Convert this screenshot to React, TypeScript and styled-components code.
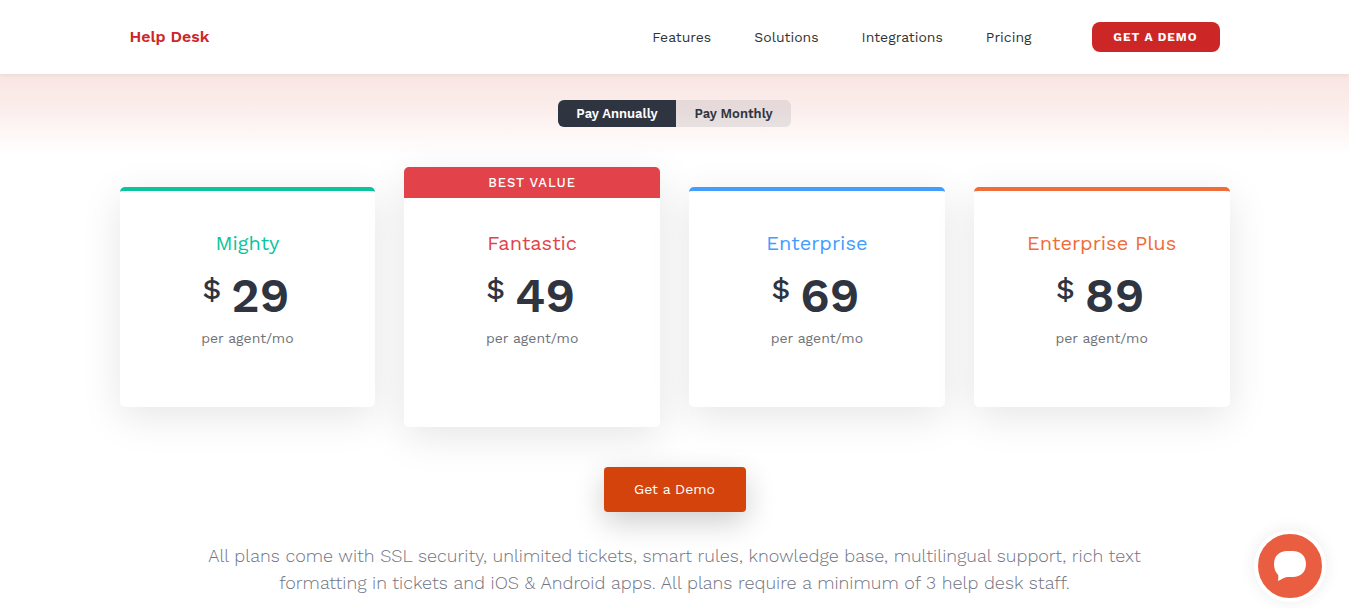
import React, { useState } from "react";
import styled, { createGlobalStyle } from "styled-components";

const GlobalStyle = createGlobalStyle`
  *, *::before, *::after { box-sizing: border-box; }
  body {
    margin: 0;
    background: #fff;
    color: #2f3441;
    font-family: "Work Sans", Inter, "Liberation Sans", sans-serif;
    font-size: 14px;
    overflow-x: hidden;
  }
  button { font-family: inherit; border: 0; cursor: pointer; }
  a { text-decoration: none; }
  h2, p { margin: 0; font-weight: 400; }
`;

const Header = styled.header`
  position: relative;
  background: #fff;
  box-shadow: 0 1px 4px rgba(90, 60, 20, 0.08);
  padding: 22px 16px;
`;

const HeaderInner = styled.div`
  max-width: 1090px;
  margin: 0 auto;
  display: flex;
  align-items: center;
  height: 30px;
`;

const Brand = styled.a`
  margin-right: auto;
  padding-bottom: 2px;
  color: #cd2626;
  font-size: 16px;
  font-weight: 600;
`;

const Nav = styled.nav`
  display: flex;
  gap: 43px;
  margin-right: 60px;
`;

const NavLink = styled.a`
  color: #333;
  font-size: 14px;
  font-weight: 400;
  line-height: 20px;
`;

const HeaderButton = styled.button`
  width: 128px;
  height: 30px;
  padding: 0;
  border-radius: 8px;
  background: #cd2626;
  color: #fff;
  font-size: 12px;
  font-weight: 700;
  letter-spacing: 1px;
`;

const Main = styled.main`
  display: flex;
  flex-direction: column;
  align-items: center;
  padding: 26px 16px 24px;
  background: linear-gradient(#f8e5e3 0, #fbeeec 36px, #fff 80px);
`;

const Toggle = styled.div`
  display: flex;
  border-radius: 6px;
  overflow: hidden;
`;

const ToggleButton = styled.button<{ $active: boolean; $width: number }>`
  width: ${(p) => p.$width}px;
  height: 27px;
  padding: 0;
  background: ${(p) => (p.$active ? "#2f3441" : "rgba(47, 52, 65, 0.1)")};
  color: ${(p) => (p.$active ? "#fff" : "#2f3441")};
  font-size: 13px;
  font-weight: 600;
`;

const Plans = styled.section`
  display: grid;
  grid-template-columns: repeat(4, 1fr);
  gap: 29px;
  align-items: center;
  width: 100%;
  max-width: 1110px;
  margin-top: 40px;
`;

const Card = styled.article<{ $color: string; $featured?: boolean }>`
  min-height: ${(p) => (p.$featured ? 260 : 220)}px;
  border-radius: 5px;
  border-top: ${(p) => (p.$featured ? "0" : `4px solid ${p.$color}`)};
  background: #fff;
  box-shadow: 0 10px 40px rgba(0, 0, 0, 0.1);
  text-align: center;
  overflow: hidden;
`;

const Ribbon = styled.div`
  background: #e2434b;
  color: #fff;
  font-size: 13px;
  font-weight: 500;
  line-height: 31px;
  letter-spacing: 1px;
`;

const CardBody = styled.div<{ $featured?: boolean }>`
  padding-top: ${(p) => (p.$featured ? 33 : 40)}px;
`;

const PlanName = styled.h2<{ $color: string }>`
  color: ${(p) => p.$color};
  font-size: 20px;
  line-height: 24px;
`;

const Price = styled.div`
  display: flex;
  justify-content: center;
  align-items: flex-start;
  gap: 10px;
  margin-top: 12px;
  padding-right: 3px;
  font-weight: 600;
`;

const Currency = styled.span`
  font-size: 30px;
  font-weight: 500;
  line-height: 44px;
`;

const Amount = styled.span`
  font-size: 48px;
  line-height: 58px;
`;

const Unit = styled.p`
  margin-top: 3px;
  color: #6f7278;
  font-size: 14px;
  line-height: 20px;
`;

const DemoButton = styled.button`
  width: 142px;
  height: 45px;
  padding: 0 0 2px;
  margin-top: 40px;
  border-radius: 4px;
  background: #d5430c;
  color: #fff;
  font-size: 14px;
  font-weight: 400;
  box-shadow: 0 10px 30px rgba(0, 0, 0, 0.2);
`;

const Note = styled.p`
  max-width: 950px;
  margin-top: 30px;
  color: #70747f;
  font-size: 18px;
  font-weight: 300;
  line-height: 27px;
  text-align: center;
`;

const ChatButton = styled.button`
  position: fixed;
  right: 23px;
  bottom: 6px;
  display: grid;
  place-items: center;
  width: 72px;
  height: 72px;
  padding: 0;
  border: 4px solid #fff;
  border-radius: 50%;
  background: #e95d41;
  box-shadow: 0 0 16px rgba(0, 0, 0, 0.08);
`;

const plans = [
  { name: "Mighty", color: "#0cc49c", annual: 29, monthly: 39 },
  { name: "Fantastic", color: "#e2434b", annual: 49, monthly: 59, featured: true },
  { name: "Enterprise", color: "#429dff", annual: 69, monthly: 79 },
  { name: "Enterprise Plus", color: "#f06c39", annual: 89, monthly: 99 },
];

export default function App() {
  const [annual, setAnnual] = useState(true);
  return (
    <>
      <GlobalStyle />
      <Header>
        <HeaderInner>
          <Brand href="#">Help Desk</Brand>
          <Nav>
            {["Features", "Solutions", "Integrations", "Pricing"].map((label) => (
              <NavLink key={label} href="#">{label}</NavLink>
            ))}
          </Nav>
          <HeaderButton>GET A DEMO</HeaderButton>
        </HeaderInner>
      </Header>
      <Main>
        <Toggle>
          <ToggleButton $width={118} $active={annual} onClick={() => setAnnual(true)}>Pay Annually</ToggleButton>
          <ToggleButton $width={115} $active={!annual} onClick={() => setAnnual(false)}>Pay Monthly</ToggleButton>
        </Toggle>
        <Plans>
          {plans.map((plan) => (
            <Card key={plan.name} $color={plan.color} $featured={plan.featured}>
              {plan.featured && <Ribbon>BEST VALUE</Ribbon>}
              <CardBody $featured={plan.featured}>
                <PlanName $color={plan.color}>{plan.name}</PlanName>
                <Price>
                  <Currency>$</Currency>
                  <Amount>{annual ? plan.annual : plan.monthly}</Amount>
                </Price>
                <Unit>per agent/mo</Unit>
              </CardBody>
            </Card>
          ))}
        </Plans>
        <DemoButton>Get a Demo</DemoButton>
        <Note>
          All plans come with SSL security, unlimited tickets, smart rules, knowledge base, multilingual support, rich
          text formatting in tickets and iOS &amp; Android apps. All plans require a minimum of 3 help desk staff.
        </Note>
      </Main>
      <ChatButton aria-label="Open chat">
        <svg width="32" height="30" viewBox="0 0 32 30" aria-hidden="true">
          <path
            fill="#fff"
            d="M13 0h6c7.500 0 13 5 13 13s-5.500 13-13 13h-6c-3.500 1-6 2.500-9 4 .4-2 .4-4 .2-6C1.500 21.500 0 17.500 0 13 0 5 5.500 0 13 0z"
          />
        </svg>
      </ChatButton>
    </>
  );
}
